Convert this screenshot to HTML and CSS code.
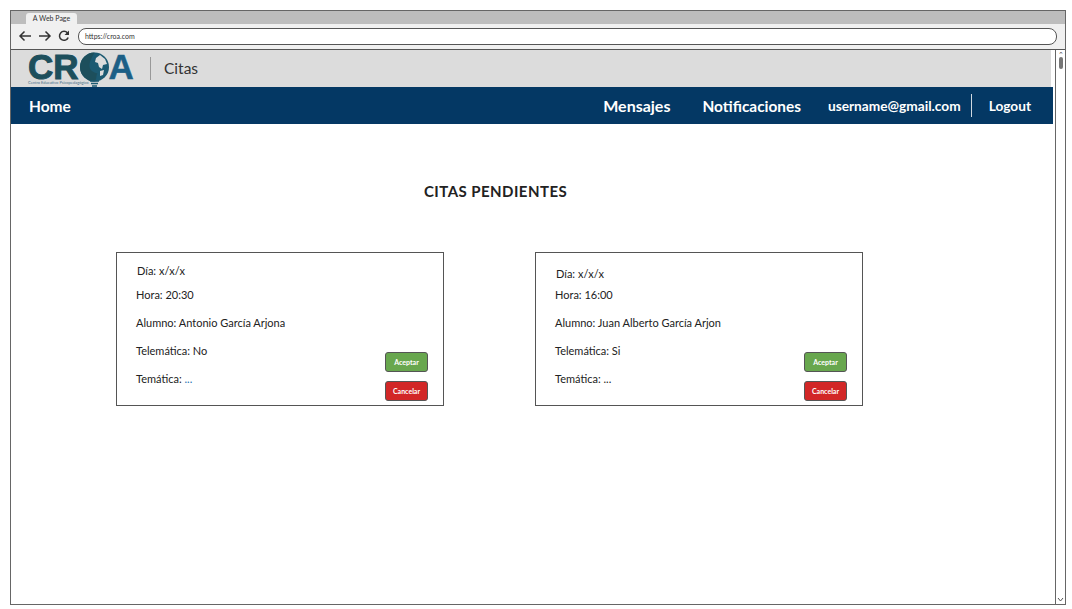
FILE: index.html
```html
<!DOCTYPE html>
<html lang="es">

<head>
    <meta charset="UTF-8">
    <title>Citas</title>
    <link rel="stylesheet" href="styles.css">
</head>

<body>

    <div class="window">
        <!-- barra del navegador -->
        <div class="tab-strip">
            <div class="tab">A Web Page</div>
        </div>
        <div class="toolbar">
            <svg class="tool-icon" width="14" height="12" viewBox="0 0 14 12"><path d="M13 6H2M6.500 1.500 2 6l4.500 4.500" /></svg>
            <svg class="tool-icon" width="14" height="12" viewBox="0 0 14 12"><path d="M1 6h11M7.500 1.500 12 6l-4.500 4.500" /></svg>
            <svg class="tool-icon" width="12" height="12" viewBox="0 0 12 12"><path d="M10.200 7.500A4.500 4.500 0 1 1 9.500 3" /><path class="filled" d="M11 0.500V5H6.500z" /></svg>
            <div class="url-field">https://croa.com</div>
        </div>

        <div class="viewport">
            <div class="page">
                <header class="site-header">
                    <div class="logo">
                        <div class="logo-mark">
                            <span class="logo-dark">CR</span>
                            <svg class="logo-globe" width="31" height="35" viewBox="0 0 31 35">
                                <circle cx="15.500" cy="15" r="14.500" fill="#1c5a72" />
                                <path d="M15.500 .5a14.500 14.500 0 0 0 0 29c3-3 1-6 3-8-4-1-8-3-8-8s3-9 5-13z" fill="#1d4f5c" />
                                <path d="M17 6l4-3 5 4 2 5-4 1-1 4-3-2-1-4-3-1zM21 19l4-1-1 5-3 1z" fill="#dcdcdc" />
                                <path d="M11 29h9M12 31.500h7M13 34h5" stroke="#1c5a72" stroke-width="1.500" fill="none" />
                            </svg>
                            <span class="logo-blue">A</span>
                        </div>
                        <div class="logo-tagline">Centro Educativo Psicopedagógico</div>
                    </div>
                    <div class="header-sep"></div>
                    <div class="header-title">Citas</div>
                </header>

                <nav class="main-nav">
                    <a class="nav-home">Home</a>
                    <a class="nav-messages">Mensajes</a>
                    <a class="nav-notifications">Notificaciones</a>
                    <a class="nav-user">username@gmail.com</a>
                    <a class="nav-logout">Logout</a>
                </nav>

                <h1 class="page-title">CITAS PENDIENTES</h1>

                <div class="cards">
                    <div class="card">
                        <div class="card-info">
                            <p class="line-dia">Día: x/x/x</p>
                            <p class="line-hora">Hora: 20:30</p>
                            <p>Alumno: Antonio García Arjona</p>
                            <p>Telemática: No</p>
                            <p>Temática: <span class="dots">...</span></p>
                        </div>
                        <div class="card-actions">
                            <button class="btn btn-ok">Aceptar</button>
                            <button class="btn btn-cancel">Cancelar</button>
                        </div>
                    </div>

                    <div class="card">
                        <div class="card-info second">
                            <p class="line-dia">Día: x/x/x</p>
                            <p class="line-hora">Hora: 16:00</p>
                            <p>Alumno: Juan Alberto García Arjon</p>
                            <p>Telemática: Si</p>
                            <p>Temática: ...</p>
                        </div>
                        <div class="card-actions">
                            <button class="btn btn-ok">Aceptar</button>
                            <button class="btn btn-cancel">Cancelar</button>
                        </div>
                    </div>
                </div>
            </div>

            <div class="scrollbar">
                <span class="arrow">&#8963;</span>
                <div class="thumb"></div>
                <svg class="arrow-down" width="7" height="5" viewBox="0 0 7 5"><path d="M1 1l2.500 3L6 1" /></svg>
            </div>
        </div>
    </div>

</body>

</html>
```

FILE: styles.css
```css
* {
    box-sizing: border-box;
}

body {
    margin: 0;
    background-color: #fff;
    font-family: Lato, "Liberation Sans", sans-serif;
    color: #222;
}

.window {
    width: 1056px;
    height: 595px;
    margin: 10px 0 0 10px;
    border: 1px solid #666;
    display: flex;
    flex-direction: column;
}

/* barra del navegador */
.tab-strip {
    height: 13px;
    padding: 2px 0 0 15px;
    background-color: #bdbdbd;
}

.tab {
    width: 51px;
    height: 11px;
    background-color: #f0f0f0;
    border-radius: 3px 3px 0 0;
    font-size: 7px;
    line-height: 11px;
    text-align: center;
    color: #333;
}

.toolbar {
    height: 26px;
    display: flex;
    align-items: center;
    padding: 0 8px 1px 7px;
    background-color: #f0f0f0;
    border-bottom: 1px solid #555;
}

.tool-icon {
    margin-right: 6px;
    fill: none;
    stroke: #333;
    stroke-width: 1.500;
}

.tool-icon .filled {
    fill: #333;
    stroke: none;
}

.url-field {
    flex: 1;
    height: 17px;
    margin-left: 2px;
    padding-left: 6px;
    border: 1px solid #555;
    border-radius: 8px;
    background-color: #fff;
    font-size: 7px;
    line-height: 15px;
    color: #333;
}

.viewport {
    flex: 1;
    display: flex;
    min-height: 0;
}

.page {
    width: 1043px;
}

.site-header {
    height: 37px;
    width: 1040px;
    display: flex;
    align-items: center;
    background-color: #dcdcdc;
}

.logo {
    width: 105px;
    height: 37px;
    margin-left: 17px;
    padding-top: 3px;
}

.logo-mark {
    display: flex;
    align-items: flex-start;
    height: 28px;
    font-family: "Liberation Sans", sans-serif;
    font-weight: bold;
    font-size: 35px;
    line-height: 28px;
}

.logo-dark {
    color: #1d4f5c;
    -webkit-text-stroke: 1px #1d4f5c;
}

.logo-blue {
    color: #1c5f86;
    margin-left: -1px;
    -webkit-text-stroke: .5px #1c5f86;
}

.logo-globe {
    flex: none;
    margin: -1px 0 0 0;
}

.logo-tagline {
    font-size: 4px;
    line-height: 4px;
    color: #4a6f8a;
}

.header-sep {
    width: 1px;
    height: 23px;
    margin: 0 13px 0 17px;
    background-color: #999;
}

.header-title {
    margin-bottom: 2px;
    font-size: 15.500px;
    color: #333;
}

.main-nav {
    height: 37px;
    display: flex;
    align-items: center;
    background-color: #043864;
    color: #fff;
}

.main-nav a {
    font-weight: bold;
    white-space: nowrap;
}

.nav-home {
    margin-left: 18px;
    margin-right: auto;
    font-size: 15.500px;
}

.nav-messages {
    font-size: 16px;
}

.nav-notifications {
    margin-left: 32px;
    font-size: 15.400px;
}

.nav-user {
    margin-left: 27px;
    padding-right: 10px;
    font-size: 13.700px;
}

.nav-logout {
    height: 23px;
    margin-right: 22px;
    padding-left: 17px;
    border-left: 1px solid #cfd8e0;
    font-size: 13.700px;
    line-height: 23px;
}

.page-title {
    margin: 58px 0 0;
    padding-left: 413px;
    font-size: 15px;
    line-height: 19px;
    font-weight: bold;
    letter-spacing: .45px;
    color: #222;
}

.cards {
    display: flex;
    gap: 91px;
    margin-top: 51px;
    padding-left: 105px;
}

/* tarjetas de citas */
.card {
    width: 328px;
    height: 154px;
    display: flex;
    justify-content: space-between;
    padding: 11px 15px 4px 20px;
    border: 1px solid #555;
}

.card-info p {
    margin: 0 0 14px;
    font-size: 11px;
    line-height: 14px;
    color: #222;
}

.card-info p.line-dia {
    margin-bottom: 10px;
}

.card-info p.line-hora {
    margin-left: -1px;
}

.card-info p:nth-child(n+3) {
    margin-left: -1px;
}

.card-info.second {
    padding-top: 3px;
}

.card-info.second p.line-dia {
    margin-bottom: 7px;
}

.dots {
    color: #1c6fb0;
}

.card-actions {
    align-self: flex-end;
    display: flex;
    flex-direction: column;
    gap: 9px;
}

.btn {
    width: 43px;
    height: 20px;
    padding: 0;
    border: 1px solid #555;
    border-radius: 3px;
    font-family: inherit;
    font-size: 7px;
    font-weight: bold;
    color: #fff;
}

.btn-ok {
    background-color: #68a74e;
}

.btn-cancel {
    background-color: #d22727;
}

/* barra de desplazamiento */
.scrollbar {
    width: 10px;
    margin-left: 2px;
    border-left: 1px solid #666;
    display: flex;
    flex-direction: column;
    align-items: center;
}

.arrow {
    height: 6px;
    font-size: 7px;
    line-height: 8px;
    color: #444;
}

.thumb {
    width: 4px;
    height: 12px;
    margin-top: 1px;
    border-radius: 2px;
    background-color: #777;
}

.arrow-down {
    margin-top: auto;
    margin-bottom: 2px;
    fill: none;
    stroke: #555;
}
```
